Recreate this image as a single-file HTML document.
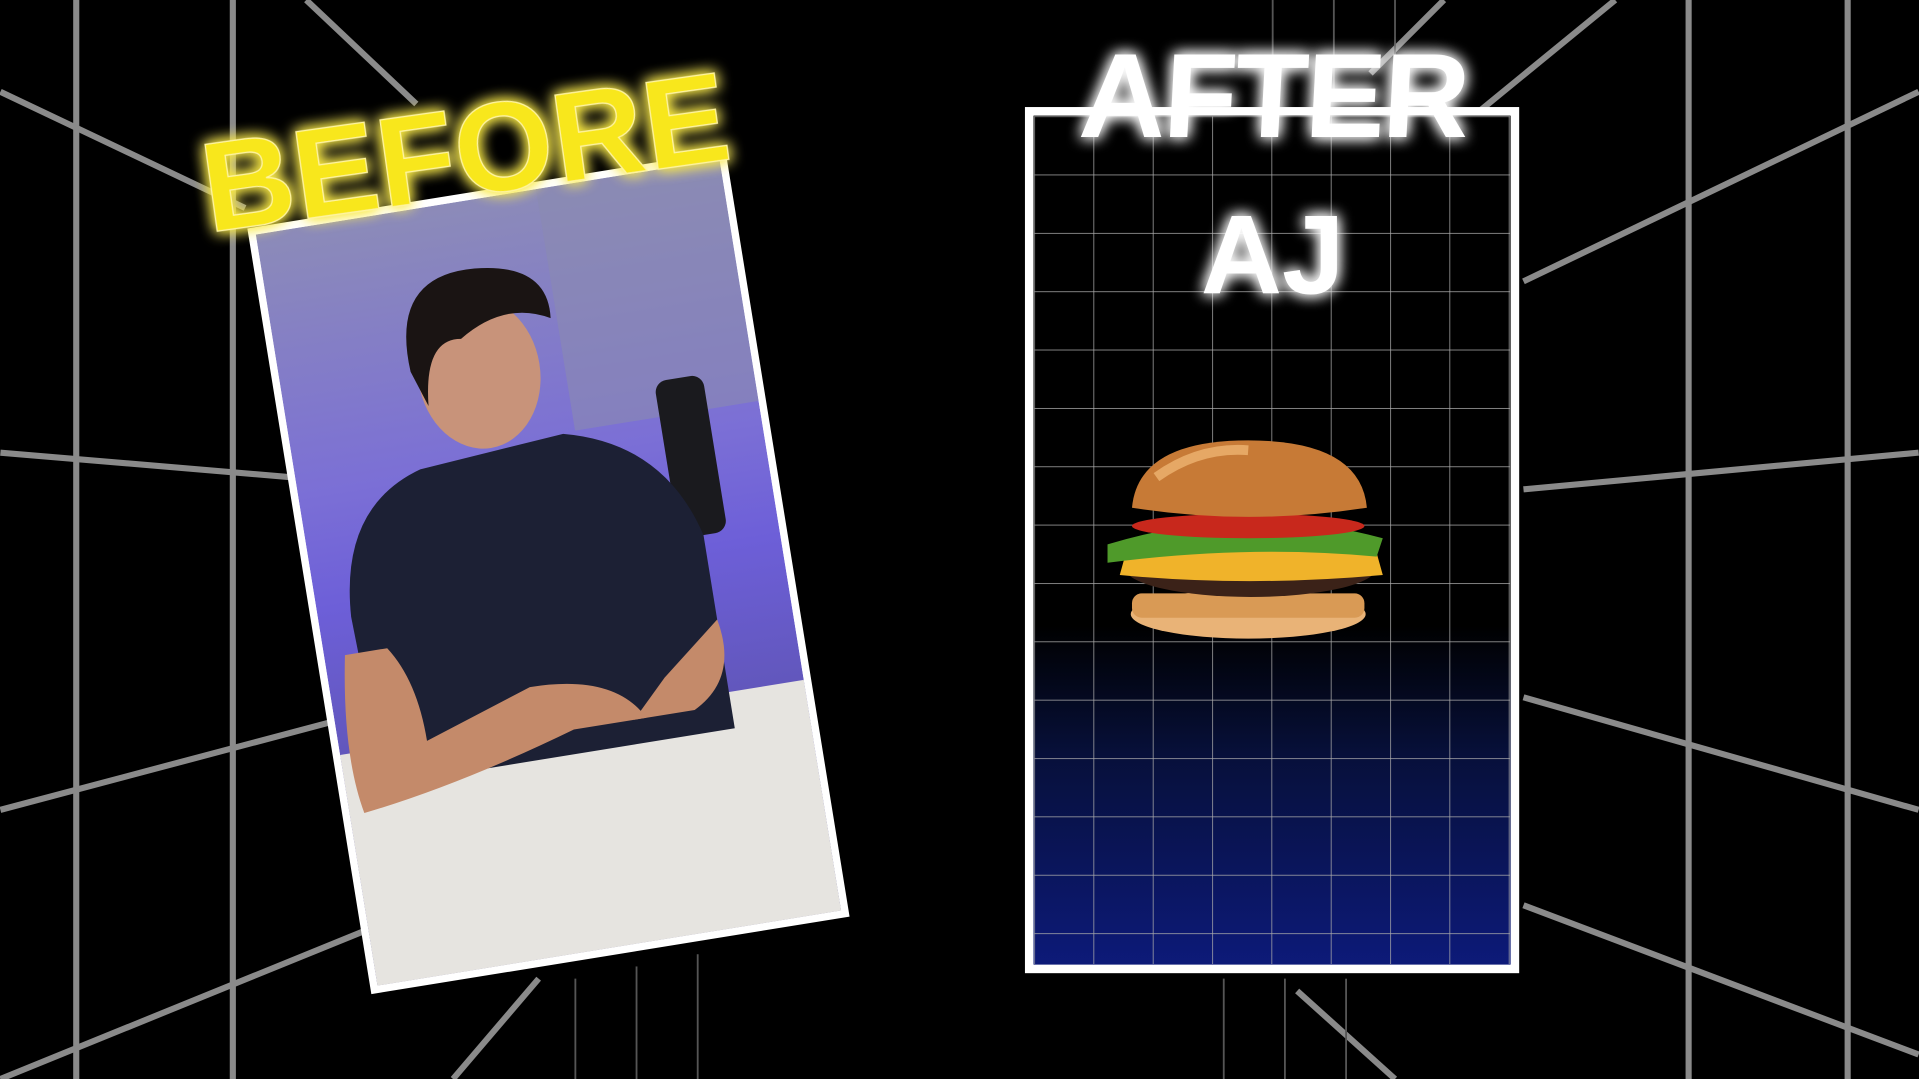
<!DOCTYPE html>
<html><head><meta charset="utf-8"><style>
html,body{margin:0;padding:0;background:#000;overflow:hidden}
svg{display:block}
</style></head><body>
<svg width="1919" height="1079" viewBox="0 0 1568 882" xmlns="http://www.w3.org/2000/svg">
<defs>
<linearGradient id="blue" x1="0" y1="0" x2="0" y2="1">
<stop offset="0" stop-color="#000"/><stop offset="0.6" stop-color="#000"/><stop offset="0.75" stop-color="#07103a"/><stop offset="1" stop-color="#0d1a7a"/></linearGradient>
<linearGradient id="wall" x1="0" y1="0" x2="0" y2="1">
<stop offset="0" stop-color="#8c8bb8"/><stop offset="0.35" stop-color="#7b6fd6"/><stop offset="0.5" stop-color="#6d5fd8"/><stop offset="1" stop-color="#504a90"/></linearGradient>
<filter id="glow" x="-20%" y="-40%" width="140%" height="180%"><feGaussianBlur stdDeviation="6" result="b"/><feMerge><feMergeNode in="b"/><feMergeNode in="b"/><feMergeNode in="SourceGraphic"/></feMerge></filter>
<pattern id="grid" x="845" y="95" width="48.5" height="47.7" patternUnits="userSpaceOnUse"><path d="M0 0H48.5M0 0V47.7" stroke="#aaa" stroke-width="1.2" fill="none"/></pattern>
<clipPath id="pc"><rect x="-192" y="-311" width="384" height="622"/></clipPath>
</defs>
<rect width="1568" height="882" fill="#000"/>
<g stroke="#8a8a8a" stroke-width="5" fill="none">
<line x1="62" y1="0" x2="62" y2="882"/><line x1="190" y1="0" x2="190" y2="882"/>
<line x1="1380" y1="0" x2="1380" y2="882"/><line x1="1510" y1="0" x2="1510" y2="882"/>
<line x1="0" y1="75" x2="200" y2="170"/><line x1="0" y1="370" x2="260" y2="392"/>
<line x1="0" y1="662" x2="290" y2="585"/><line x1="0" y1="882" x2="300" y2="760"/>
<line x1="1568" y1="75" x2="1245" y2="230"/><line x1="1568" y1="370" x2="1245" y2="400"/>
<line x1="1568" y1="662" x2="1245" y2="570"/><line x1="1568" y1="862" x2="1245" y2="740"/>
<line x1="250" y1="0" x2="340" y2="85"/><line x1="1320" y1="0" x2="1210" y2="90"/>
<line x1="1180" y1="0" x2="1120" y2="60"/><line x1="1060" y1="810" x2="1140" y2="882"/>
<line x1="440" y1="800" x2="370" y2="882"/>
</g>
<g stroke="#555" stroke-width="1.5">
<line x1="1040" y1="0" x2="1040" y2="80"/><line x1="1090" y1="0" x2="1090" y2="80"/><line x1="1140" y1="0" x2="1140" y2="80"/>
<line x1="470" y1="800" x2="470" y2="882"/><line x1="520" y1="790" x2="520" y2="882"/><line x1="570" y1="780" x2="570" y2="882"/>
<line x1="1050" y1="800" x2="1050" y2="882"/><line x1="1100" y1="800" x2="1100" y2="882"/><line x1="1000" y1="800" x2="1000" y2="882"/>
</g>
<rect x="841" y="91" width="397" height="701" fill="url(#blue)" stroke="#fff" stroke-width="7"/>
<rect x="845" y="95" width="389" height="693" fill="url(#grid)"/>
<g>
<ellipse cx="1020" cy="502" rx="96" ry="20" fill="#e9b377"/>
<rect x="925" y="485" width="190" height="20" rx="8" fill="#d99a55"/>
<ellipse cx="1022" cy="464" rx="103" ry="24" fill="#3b2218"/>
<path d="M920 452 Q1020 430 1125 452 L1130 470 Q1020 480 915 470Z" fill="#f0b32a"/>
<path d="M905 445 Q1020 410 1130 440 L1125 455 Q1020 445 905 460Z" fill="#4f9a2a"/>
<ellipse cx="1020" cy="430" rx="95" ry="10" fill="#c8281c"/>
<path d="M925 415 Q930 360 1020 360 Q1112 360 1117 415 Q1020 430 925 415Z" fill="#c77a36"/>
<path d="M945 390 Q980 365 1020 368" stroke="#e6a865" stroke-width="8" fill="none"/>
</g>
<g filter="url(#glow)" fill="#fff" font-family="Liberation Sans, sans-serif" font-weight="bold" text-anchor="middle">
<text x="1040" y="112" font-size="98" letter-spacing="-2" transform="skewX(-3) translate(5 0)">AFTER</text>
<text x="1040" y="240" font-size="92">AJ</text>
</g>
<g transform="translate(448 468) rotate(-9.2)">
<rect x="-198" y="-317" width="396" height="634" fill="#fff"/>
<g clip-path="url(#pc)">
<rect x="-192" y="-311" width="384" height="622" fill="url(#wall)"/>
<rect x="40" y="-311" width="152" height="200" fill="#8a8ab0" opacity="0.6"/>
<rect x="-192" y="120" width="384" height="200" fill="#e6e4e0"/>
<rect x="110" y="-140" width="40" height="130" rx="10" fill="#1a1a1e"/>
<path d="M-165 10 Q-160 -80 -90 -100 L30 -110 Q110 -90 130 -10 L130 150 L-160 150Z" fill="#1c2034"/>
<path d="M-175 40 Q-190 120 -180 170 Q-100 160 0 130 L60 130 Q40 90 -30 90 L-120 120 Q-120 70 -140 40Z" fill="#c48a6a"/>
<path d="M130 60 Q140 110 100 130 L50 130 L80 100Z" fill="#c48a6a"/>
<ellipse cx="-30" cy="-170" rx="50" ry="62" fill="#c8937a"/>
<path d="M-85 -180 Q-90 -260 -20 -255 Q40 -250 35 -205 Q0 -225 -40 -200 Q-70 -205 -75 -150Z" fill="#1a1413"/>
</g>
</g>
<g transform="translate(380 125) rotate(-8)" filter="url(#glow)">
<text x="0" y="35" font-family="Liberation Sans, sans-serif" font-weight="bold" font-size="104" fill="#f8e71a" stroke="#fff4a0" stroke-width="1" text-anchor="middle">BEFORE</text>
</g>
</svg>
</body></html>
